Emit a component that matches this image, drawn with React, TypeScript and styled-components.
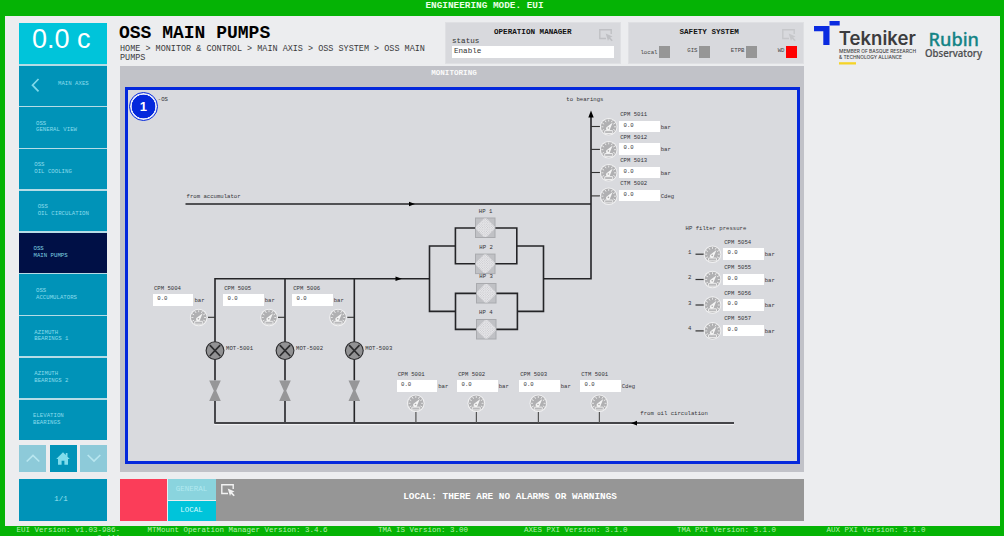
import React from "react";
import styled, { createGlobalStyle } from "styled-components";

const GlobalStyle = createGlobalStyle`
  * { box-sizing: border-box; }
  body { margin: 0; }
`;

const mono = `"Liberation Mono", "Courier New", monospace`;

/* ---------- frame ---------- */

const Screen = styled.div`
  width: 1004px;
  height: 536px;
  overflow: hidden;
  display: grid;
  grid-template-rows: 16px 510px 10px;
  background: #05b305;
  font-family: ${mono};
  white-space: pre;
`;

const ModeBar = styled.header`
  display: flex;
  justify-content: center;
  padding-right: 35px;
  font-size: 9.4px;
  font-weight: 700;
  line-height: 12px;
  color: #e9ffe6;
`;

const Body = styled.div`
  display: grid;
  grid-template-columns: 88px 684px 1fr;
  column-gap: 13px;
  margin: 0 4px 0 5px;
  padding: 7px 0 5px 14px;
  background: #ecedef;
`;

const VersionBar = styled.footer`
  display: flex;
  height: 10px;
  overflow: hidden;
  font-size: 7.5px;
  line-height: 8px;
  color: #b4f0ae;
`;

const Version = styled.div<{ $x: number; $w: number }>`
  flex: none;
  width: ${(p) => p.$w}px;
  margin-left: ${(p) => p.$x}px;
  text-align: right;
`;

/* ---------- sidebar ---------- */

const Sidebar = styled.nav`
  display: flex;
  flex-direction: column;
`;

const Readout = styled.div`
  height: 41px;
  background: #00c4da;
  color: #fff;
  font: 27px/33px "Liberation Sans", Arial, sans-serif;
  padding-left: 13px;
`;

const Menu = styled.div`
  display: grid;
  grid-template-rows: repeat(9, 1fr);
  gap: 1.5px;
  padding-top: 1.6px;
  height: 376px;
  background: #b5dce6;
`;

const MenuItem = styled.div<{ $active?: boolean; $indent: number }>`
  display: flex;
  align-items: center;
  padding: 0 0 0 ${(p) => p.$indent}px;
  background: ${(p) => (p.$active ? "#001046" : "#0093b8")};
  color: ${(p) => (p.$active ? "#7fd0e2" : "#8bdcec")};
  font-size: 5.7px;
  line-height: 6.8px;
`;

const Back = styled(MenuItem)`
  gap: 18px;
  padding-bottom: 2px;
`;

const PagerRow = styled.div`
  display: flex;
  justify-content: space-between;
  margin-top: 5px;
  height: 27px;
`;

const PagerButton = styled.div<{ $on?: boolean }>`
  width: 27px;
  display: grid;
  place-items: center;
  background: ${(p) => (p.$on ? "#0093b8" : "#8dcad9")};
`;

const PageCount = styled.div`
  display: grid;
  place-items: center;
  margin-top: 7px;
  height: 42px;
  padding: 0 4px 3px 0;
  background: #0093b8;
  color: #9fe3f0;
  font-size: 7.5px;
`;

/* ---------- main column ---------- */

const Main = styled.main`
  display: flex;
  flex-direction: column;
`;

const TopRow = styled.div`
  display: flex;
  height: 43px;
`;

const Heading = styled.div`
  width: 325px;
  margin-top: -1px;
`;

const Title = styled.h1`
  margin: 0 0 1px -1px;
  font-size: 18px;
  line-height: 22px;
  font-weight: 700;
  color: #000;
`;

const Crumbs = styled.div`
  font-size: 8.47px;
  line-height: 8.5px;
  color: #3a3a3c;
`;

const Box = styled.section`
  position: relative;
  width: 176px;
  height: 42px;
  margin: -1px 7px 0 0;
  background: #d8d9dd;
  border: 1px solid #dfe0e3;
  &:last-child { margin-right: 0; }
`;

const BoxTitle = styled.h2<{ $shift: number }>`
  margin: 4px 0 0 ${(p) => p.$shift}px;
  font-size: 7.6px;
  line-height: 10px;
  font-weight: 700;
  color: #111;
`;

const PopOut = styled.svg`
  position: absolute;
  right: 7px;
  top: 6px;
`;

const Field = styled.label`
  display: block;
  padding-left: 6px;
  font-size: 7.6px;
  line-height: 9px;
  color: #333;
`;

const FieldValue = styled.div`
  width: 162px;
  height: 12px;
  padding-left: 2px;
  line-height: 10px;
  background: #fff;
`;

const Lamps = styled.div`
  display: flex;
  margin-top: 9px;
`;

const Lamp = styled.div<{ $w: number; $low?: boolean }>`
  display: flex;
  justify-content: flex-end;
  gap: 1px;
  width: ${(p) => p.$w}px;
  font-size: 5.7px;
  line-height: ${(p) => (p.$low ? 13 : 9)}px;
  color: #444;
`;

const LampDot = styled.i<{ $red?: boolean }>`
  width: 11.5px;
  height: 12px;
  background: ${(p) => (p.$red ? "#ff0000" : "#969696")};
`;

const Monitor = styled.section`
  height: 406px;
  padding: 0 4px 0 5px;
  background: #c1c2c8;
`;

const MonitorTitle = styled.h2`
  margin: 0;
  height: 21px;
  padding-right: 17px;
  text-align: center;
  font-size: 7.6px;
  line-height: 14px;
  color: #fafafa;
`;

const Canvas = styled.div`
  position: relative;
  width: 675px;
  height: 377px;
  border: 3px solid #0428dc;
  background: #d9dade;
  svg.pipes { display: block; }
`;

const AlarmRow = styled.div`
  display: grid;
  grid-template-columns: 47px 48px 1fr;
  column-gap: 0.6px;
  margin-top: 7px;
  height: 42px;
`;

const AlarmLight = styled.div`
  background: #fb3d59;
`;

const Tabs = styled.div`
  display: grid;
  grid-template-rows: 1fr 1fr;
  row-gap: 1px;
`;

const Tab = styled.div<{ $on?: boolean }>`
  display: grid;
  place-items: center;
  padding-bottom: 1px;
  background: ${(p) => (p.$on ? "#00c4da" : "#8ad4de")};
  color: ${(p) => (p.$on ? "#d5fbff" : "#b2e9f0")};
  font-size: 7.5px;
`;

const AlarmText = styled.div`
  display: flex;
  align-items: flex-start;
  background: #969696;
  color: #fff;
  font-size: 9.4px;
  font-weight: 700;
  line-height: 35px;
  svg { margin: 5px 168px 0 5px; flex: none; }
`;

/* ---------- diagram nodes ---------- */

// Diagram coordinates are screen coordinates; this is the canvas's inner corner.
const OX = 128;
const OY = 90;

const Note = styled.span<{ $x: number; $y: number }>`
  position: absolute;
  left: ${(p) => p.$x - OX}px;
  top: ${(p) => p.$y - OY - 3.5}px;
  font-size: 5.64px;
  line-height: 8px;
  color: #333337;
`;

const SensorBox = styled.div<{ $x: number; $y: number }>`
  position: absolute;
  left: ${(p) => p.$x - OX}px;
  top: ${(p) => p.$y - OY}px;
  display: grid;
  grid-template-columns: 40.5px auto;
  column-gap: 1.2px;
  font-size: 5.64px;
  color: #333337;
`;

const SensorName = styled.div`
  grid-column: 1 / -1;
  height: 9.5px;
  padding-left: 1.2px;
  line-height: 8.5px;
`;

const SensorValue = styled.div`
  height: 11.5px;
  padding-left: 4.6px;
  line-height: 10px;
  background: #fff;
`;

const SensorUnit = styled.div`
  line-height: 13px;
`;

const Badge = styled.div`
  position: absolute;
  left: 0.8px;
  top: 1.5px;
  width: 29px;
  height: 29px;
  display: grid;
  place-items: center;
  border: 1.6px solid #0428dc;
  border-radius: 50%;
  background: radial-gradient(circle, #0428dc 11.6px, #e6e9fa 12.1px);
  color: #fff;
  font: 700 13px/27px "Liberation Sans", Arial, sans-serif;
`;

type SensorProps = { name: string; x: number; y: number; unit?: string };

function Sensor({ name, x, y, unit = "bar" }: SensorProps) {
  return (
    <SensorBox $x={x} $y={y - 9.5}>
      <SensorName>{name}</SensorName>
      <SensorValue>0.0</SensorValue>
      <SensorUnit>{unit}</SensorUnit>
    </SensorBox>
  );
}

function Gauge({ x, y }: { x: number; y: number }) {
  const ticks = [-120, -90, -60, -30, 0, 30, 60, 90, 120];
  return (
    <g transform={`translate(${x} ${y})`}>
      <circle r="8.8" fill="#f1f1f2" />
      <circle r="7.8" fill="#b0b0b2" />
      {ticks.map((a) => (
        <path key={a} d="M0-7.3V-5.3" stroke="#f4f4f4" strokeWidth="0.8" transform={`rotate(${a})`} />
      ))}
      <path d="M-2 .3 4-4.300 1.500 1.800A2.100 2.100 0 1 1-2 .3Z" fill="#f4f4f4" />
      <circle cx="-.3" cy="1.2" r=".8" fill="#aaa" />
      <rect x="-4" y="3.8" width="8" height="2.9" rx=".4" fill="#b9b9bb" stroke="#f4f4f4" strokeWidth=".9" />
    </g>
  );
}

function Motor({ x }: { x: number }) {
  return (
    <g transform={`translate(${x} 350.6)`} stroke="#2c2c2e">
      <circle r="8.9" fill="#929294" strokeWidth="1.1" />
      <path d="M-5.2-5.4 5.2 5.4M5.2-5.4-5.2 5.4" strokeWidth="1.7" />
    </g>
  );
}

function Valve({ x }: { x: number }) {
  return (
    <g transform={`translate(${x} 390.7)`}>
      <rect x="-2" y="-10.3" width="4" height="20.6" fill="#d9dade" />
      <path d="M-5.8-10.3H5.8L1.2 0 5.8 10.3H-5.8L-1.2 0Z" fill="#969698" />
    </g>
  );
}

function Filter({ x, y }: { x: number; y: number }) {
  const diamond = "M9 1H11.500L19.500 9V11.500L11.500 19.500H9L1 11.500V9Z";
  return (
    <g transform={`translate(${x} ${y})`}>
      <rect x=".5" y=".5" width="19.5" height="19.5" fill="#c0c1c5" stroke="#a9aaae" />
      <path d={diamond} fill="#ececee" />
      <path d={diamond} fill="url(#mesh)" />
    </g>
  );
}

const riser = [
  { name: "CPM 5011", y: 120.5 },
  { name: "CPM 5012", y: 143.4 },
  { name: "CPM 5013", y: 166.5 },
  { name: "CTM 5002", y: 189.9, unit: "Cdeg" },
];
const filterSensors = [
  { name: "CPM 5054", y: 248.2 },
  { name: "CPM 5055", y: 273.5 },
  { name: "CPM 5056", y: 299 },
  { name: "CPM 5057", y: 324.9 },
];
const pumps = [
  { name: "CPM 5004", motor: "MOT-5001", x: 152.7, pipe: 215 },
  { name: "CPM 5005", motor: "MOT-5002", x: 223, pipe: 285 },
  { name: "CPM 5006", motor: "MOT-5003", x: 292, pipe: 354.3 },
];
const supply = [
  { name: "CPM 5001", x: 396.5 },
  { name: "CPM 5002", x: 457 },
  { name: "CPM 5003", x: 519 },
  { name: "CTM 5001", x: 580, unit: "Cdeg" },
];

function Pipes() {
  return (
    <svg className="pipes" width="669" height="371" viewBox={`${OX} ${OY} 669 371`} fill="none">
      <defs>
        <pattern id="mesh" width="2.4" height="2.4" patternUnits="userSpaceOnUse">
          <circle cx=".6" cy=".6" r=".55" fill="#bcbdc1" />
          <circle cx="1.8" cy="1.8" r=".55" fill="#bcbdc1" />
        </pattern>
      </defs>
      <g stroke="#242427" strokeWidth="1.6">
        <path d="M185.500 204H591M591 115V278.800H543.500" />
        <path d="M215 423V278.800H429.500M285 278.800V423M354.300 278.800V423" />
        <path d="M429.500 246H455.400M429.500 311.400H455.400M429.500 245.200V312.200M543.500 245.200V312.200M516.800 246H543.500M517.300 311.400H543.500" />
        <path d="M455.400 228H516.800V263.800H455.400Z" />
        <path d="M455.500 293.400H517.400V329.400H455.500Z" />
      </g>
      <path d="M214 424.600H734" stroke="#f2f2f4" />
      <path d="M214.300 423H734" stroke="#444448" strokeWidth="1.8" />
      <g fill="#000">
        <path d="M591 110.500 593.700 117.500H588.300Z" />
        <path d="M415 204 409 201.800V206.200Z" />
        <path d="M402 278.800 395.500 276.500V281.100Z" />
        <path d="M631 423.200 637 420.800V425.600Z" />
      </g>
      {riser.map((s) => (
        <g key={s.name}>
          <path d={`M591 ${s.y + 6}H600`} stroke="#333" strokeWidth="1.100" />
          <Gauge x={608.7} y={s.y + 6.3} />
        </g>
      ))}
      {filterSensors.map((s) => (
        <g key={s.name}>
          <path d={`M695.500 ${s.y + 6}H704`} stroke="#333" strokeWidth="1.200" />
          <Gauge x={712.5} y={s.y + 6} />
        </g>
      ))}
      {pumps.map((p) => (
        <g key={p.name}>
          <path d={`M${p.pipe - 7} 317.300H${p.pipe}`} stroke="#333" strokeWidth="1.100" />
          <Gauge x={p.x + 46} y={317.5} />
          <Motor x={p.pipe} />
          <Valve x={p.pipe} />
        </g>
      ))}
      {supply.map((s) => (
        <g key={s.name}>
          <path d={`M${s.x + 19.4} 411V423`} stroke="#555" strokeWidth="1.200" />
          <Gauge x={s.x + 19.3} y={403.3} />
        </g>
      ))}
      <Filter x={475} y={217.5} />
      <Filter x={475} y={253.6} />
      <Filter x={476} y={283} />
      <Filter x={476} y={319} />
    </svg>
  );
}

function Diagram() {
  return (
    <Canvas>
      <Pipes />
      <Note $x={157.8} $y={99.5}>-OS</Note>
      <Note $x={566.3} $y={99.5}>to bearings</Note>
      <Note $x={186.5} $y={196.3}>from accumulator</Note>
      <Note $x={640.3} $y={413.8}>from oil circulation</Note>
      <Note $x={685.5} $y={228}>HP filter pressure</Note>
      <Note $x={478.8} $y={211.2}>HP 1</Note>
      <Note $x={479.3} $y={247.2}>HP 2</Note>
      <Note $x={479.3} $y={276.5}>HP 3</Note>
      <Note $x={479} $y={312.7}>HP 4</Note>
      {riser.map((s) => <Sensor key={s.name} {...s} x={619} />)}
      {filterSensors.map((s) => <Sensor key={s.name} {...s} x={723} />)}
      {filterSensors.map((s, i) => (
        <Note key={s.name} $x={688} $y={s.y + 4}>{i + 1}</Note>
      ))}
      {pumps.map((p) => <Sensor key={p.name} name={p.name} x={p.x} y={294} />)}
      {pumps.map((p) => <Note key={p.motor} $x={p.pipe + 11} $y={348.3}>{p.motor}</Note>)}
      {supply.map((s) => <Sensor key={s.name} {...s} y={380.4} />)}
      <Badge>1</Badge>
    </Canvas>
  );
}

/* ---------- icons and logos ---------- */

function PopOutShape({ color }: { color: string }) {
  return (
    <>
      <path d="M7 9.500H.8V.8H12.200V5" fill="none" stroke={color} strokeWidth="1.400" />
      <path d="M6.700 4.500 13.500 7.500 11.200 8.500 13.800 11.200 12.600 12.300 10 9.700 9 12Z" fill={color} />
    </>
  );
}

const Logos = styled.div`
  margin: -3px 0 0 -4px;
`;

function Brand() {
  return (
    <Logos>
      <svg width="172" height="48" viewBox="813 20 172 48">
        <path d="M829.500 21H839.700V25.600H829.500ZM814 26H829.500V45H823.300V31.200H814Z" fill="#0a2be0" />
        <text x="838.800" y="45.200" fontFamily="Inter, sans-serif" fontWeight="600" fontSize="18.500" fill="#3c3c3e" textLength="77" lengthAdjust="spacingAndGlyphs">Tekniker</text>
        <g fontFamily="Inter, sans-serif" fontWeight="500" fontSize="5" fill="#444446">
          <text x="839" y="53.300" textLength="77" lengthAdjust="spacingAndGlyphs">MEMBER OF BASQUE RESEARCH</text>
          <text x="839" y="59" textLength="63" lengthAdjust="spacingAndGlyphs">&amp; TECHNOLOGY ALLIANCE</text>
        </g>
        <path d="M839 62.200H856V64.500H839Z" fill="#f5d327" />
        <text x="928.500" y="45.800" fontFamily="Noto Sans, sans-serif" fontWeight="500" fontSize="18.800" fill="#148486" stroke="#148486" strokeWidth=".3" textLength="50.500" lengthAdjust="spacingAndGlyphs">Rubin</text>
        <text x="925" y="56.800" fontFamily="Noto Sans, sans-serif" fontWeight="500" fontSize="10" fill="#4c4e50" stroke="#4c4e50" strokeWidth=".2" textLength="57" lengthAdjust="spacingAndGlyphs">Observatory</text>
      </svg>
    </Logos>
  );
}

const menu = [
  { text: "OSS\nGENERAL VIEW", indent: 17 },
  { text: "OSS\nOIL COOLING", indent: 15.3 },
  { text: "OSS\nOIL CIRCULATION", indent: 18.7 },
  { text: "OSS\nMAIN PUMPS", indent: 14.5, active: true },
  { text: "OSS\nACCUMULATORS", indent: 17 },
  { text: "AZIMUTH\nBEARINGS 1", indent: 15.3 },
  { text: "AZIMUTH\nBEARINGS 2", indent: 15.3 },
  { text: "ELEVATION\nBEARINGS", indent: 14 },
];

export default function App() {
  return (
    <>
      <GlobalStyle />
      <Screen>
        <ModeBar>ENGINEERING MODE. EUI</ModeBar>
        <Body>
          <Sidebar>
            <Readout>0.0 c</Readout>
            <Menu>
              <Back $indent={12}>
                <svg width="9" height="14" viewBox="0 0 9 14" fill="none" stroke="#7fd9ea" strokeWidth="1.700">
                  <path d="M7.500 1 1.500 7.200 7.500 13.400" />
                </svg>
                MAIN AXES
              </Back>
              {menu.map((m) => (
                <MenuItem key={m.text} $indent={m.indent} $active={m.active}>{m.text}</MenuItem>
              ))}
            </Menu>
            <PagerRow>
              <PagerButton>
                <svg width="14" height="9" fill="none" stroke="#b8e6ef" strokeWidth="1.700"><path d="M.7 7.500 7 1.500 13.300 7.500" /></svg>
              </PagerButton>
              <PagerButton $on>
                <svg width="14" height="13" fill="#7fdcec"><path d="M7 .3 9.800 3V1H11.500V4.700L13.800 7H12V12.800H8.400V8.800H5.600V12.800H2V7H.2Z" /></svg>
              </PagerButton>
              <PagerButton>
                <svg width="14" height="9" fill="none" stroke="#b8e6ef" strokeWidth="1.700"><path d="M.7 1 7 7 13.300 1" /></svg>
              </PagerButton>
            </PagerRow>
            <PageCount>1/1</PageCount>
          </Sidebar>

          <Main>
            <TopRow>
              <Heading>
                <Title>OSS MAIN PUMPS</Title>
                <Crumbs>{"HOME > MONITOR & CONTROL > MAIN AXIS > OSS SYSTEM > OSS MAIN\nPUMPS"}</Crumbs>
              </Heading>
              <Box>
                <BoxTitle $shift={48}>OPERATION MANAGER</BoxTitle>
                <Field>
                  status
                  <FieldValue>Enable</FieldValue>
                </Field>
                <PopOut width="14" height="13"><PopOutShape color="#bfc0c4" /></PopOut>
              </Box>
              <Box>
                <BoxTitle $shift={50.5}>SAFETY SYSTEM</BoxTitle>
                <Lamps>
                  <Lamp $w={41} $low>local<LampDot /></Lamp>
                  <Lamp $w={40}>GIS<LampDot /></Lamp>
                  <Lamp $w={47}>ETPB<LampDot /></Lamp>
                  <Lamp $w={40}>WD<LampDot $red /></Lamp>
                </Lamps>
                <PopOut width="14" height="13"><PopOutShape color="#c6c7ca" /></PopOut>
              </Box>
            </TopRow>
            <Monitor>
              <MonitorTitle>MONITORING</MonitorTitle>
              <Diagram />
            </Monitor>
            <AlarmRow>
              <AlarmLight />
              <Tabs>
                <Tab>GENERAL</Tab>
                <Tab $on>LOCAL</Tab>
              </Tabs>
              <AlarmText>
                <svg width="14" height="13"><PopOutShape color="#f2f2f2" /></svg>
                LOCAL: THERE ARE NO ALARMS OR WARNINGS
              </AlarmText>
            </AlarmRow>
          </Main>

          <Brand />
        </Body>
        <VersionBar>
          <Version $x={16.5} $w={103}>{"EUI Version: v1.03-986-\n2.444"}</Version>
          <Version $x={28} $w={180}>MTMount Operation Manager Version: 3.4.6</Version>
          <Version $x={50.5} $w={90}>TMA IS Version: 3.00</Version>
          <Version $x={56} $w={103}>AXES PXI Version: 3.1.0</Version>
          <Version $x={50} $w={99}>TMA PXI Version: 3.1.0</Version>
          <Version $x={50.5} $w={99}>AUX PXI Version: 3.1.0</Version>
        </VersionBar>
      </Screen>
    </>
  );
}
